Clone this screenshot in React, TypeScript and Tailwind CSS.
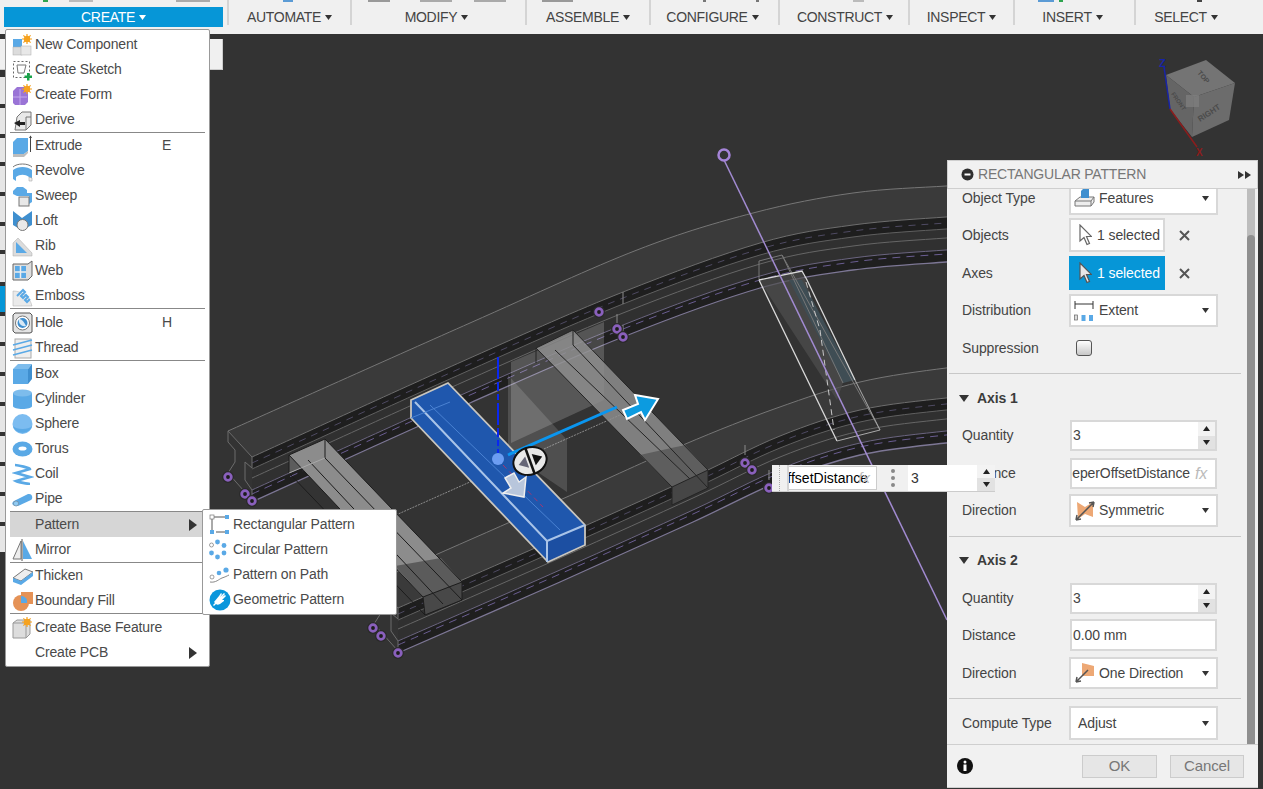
import type { ReactNode } from "react"

type Pt = number[]

const BLUE = "#5aa9e6"
const BLUE_D = "#3f8fcf"
const GRAY = "#dcdcdc"

const smooth = (pts: Pt[]) => {
  let d = `M${pts[0][0]},${pts[0][1]}`
  for (let i = 0; i < pts.length - 1; i++) {
    const p0 = pts[i - 1] || pts[i]
    const p1 = pts[i]
    const p2 = pts[i + 1]
    const p3 = pts[i + 2] || p2
    const c1x = p1[0] + (p2[0] - p0[0]) / 6
    const c1y = p1[1] + (p2[1] - p0[1]) / 6
    const c2x = p2[0] - (p3[0] - p1[0]) / 6
    const c2y = p2[1] - (p3[1] - p1[1]) / 6
    d += ` C${c1x},${c1y} ${c2x},${c2y} ${p2[0]},${p2[1]}`
  }
  return d
}

const shift = (pts: Pt[], dy: number) => pts.map(([x, y]) => [x, y + dy])

const band = (a: Pt[], b: Pt[]) => `${smooth(a)} ${smooth([...b].reverse()).replace("M", "L")} Z`

function Sun({ x = 16, y = 5 }: { x?: number; y?: number }) {
  return (
    <g stroke="#f5a21f" strokeWidth="1.2">
      <circle cx={x} cy={y} r="2.6" fill="#f7a823" />
      <path d={`M${x - 5},${y}h10M${x},${y - 5}v10M${x - 3.6},${y - 3.6}l7.2,7.2M${x + 3.6},${y - 3.6}l-7.2,7.2`} />
    </g>
  )
}

function Ico({ children }: { children: ReactNode }) {
  return (
    <svg width="22" height="22" viewBox="0 0 22 22" className="shrink-0">
      {children}
    </svg>
  )
}

const icons: Record<string, ReactNode> = {
  component: (
    <Ico>
      <rect x="1" y="5" width="9" height="8" fill={BLUE} />
      <rect x="1" y="13" width="9" height="8" fill={GRAY} stroke="#aaa" strokeWidth=".5" />
      <rect x="9" y="12" width="10" height="9" fill="#e8e8e8" stroke="#aaa" strokeWidth=".5" />
      <Sun x={15} y={5} />
    </Ico>
  ),
  sketch: (
    <Ico>
      <rect x="1.5" y="2.5" width="16" height="16" fill="none" stroke="#666" strokeWidth="1" strokeDasharray="2 2" />
      <path d="M5,6h9l-2,8H6z" fill="none" stroke="#777" />
      <path d="M15,14h2.5v2.5H20v2.5h-2.5v2.5H15V19h-2.500v-2.500H15z" fill="#1aa34a" />
    </Ico>
  ),
  form: (
    <Ico>
      <path d="M1,7l4-4h11v15l-3,3H3l-2-2z" fill="#9a74d6" />
      <path d="M1,13h14M8,5v16" stroke="#c3a9ec" />
      <Sun x={15} y={5} />
    </Ico>
  ),
  derive: (
    <Ico>
      <path d="M5,8l5-5h9v13l-5,5H3z" fill="#e9e9e9" stroke="#777" />
      <path d="M14,8h5M14,8v13" stroke="#777" />
      <path d="M2,14l6-3v2h5v3H8v2z" fill="#222" />
    </Ico>
  ),
  extrude: (
    <Ico>
      <path d="M1,7l4-4h11v13l-4,3H1z" fill={BLUE} />
      <path d="M1,19h11l4-3v2l-4,4H1z" fill="#bdbdbd" />
      <path d="M18.500,1v16" stroke="#444" />
      <path d="M17,3l1.500-2.500L20,3z" fill="#444" />
    </Ico>
  ),
  revolve: (
    <Ico>
      <path d="M1,7c4-4,15-4,19,0" fill="none" stroke="#777" />
      <path d="M1,10c5-4,14-4,19,0v9l-3,2v-4c-4-3-9-3-13,0v4l-3-2z" fill={BLUE} />
      <path d="M17,17l3,1v3h-3z" fill="#eee" stroke="#999" strokeWidth=".5" />
    </Ico>
  ),
  sweep: (
    <Ico>
      <path d="M1,6l4-4h6l4,3v3h5v9l-3,2v-8H5l-4-2z" fill={BLUE} />
      <rect x="7" y="12" width="10" height="9" fill="#e8e8e8" stroke="#777" />
    </Ico>
  ),
  loft: (
    <Ico>
      <path d="M1,1l9,7 10-7v14l-6,3H6l-5-3z" fill={BLUE_D} />
      <circle cx="10.500" cy="15" r="5.500" fill="#e9e9e9" stroke="#777" />
    </Ico>
  ),
  rib: (
    <Ico>
      <path d="M1,21V8l5-5 14,15v3z" fill={GRAY} stroke="#aaa" strokeWidth=".5" />
      <path d="M4,18V7l11,11z" fill={BLUE} />
    </Ico>
  ),
  web: (
    <Ico>
      <path d="M1,4h15l4-3v15l-4,4H1z" fill="#ddd" stroke="#666" />
      <rect x="3" y="6" width="11" height="12" fill={BLUE} />
      <path d="M8.500,6v12M3,12h11" stroke="#eee" strokeWidth="1.500" />
    </Ico>
  ),
  emboss: (
    <Ico>
      <path d="M1,21V6c9,0,17,6,19,15z" fill="#eaeaea" stroke="#aaa" strokeWidth=".5" />
      <path d="M5,11l6-6 2,2-4,4 2,2 3-3 2,2-3,3 2,2 3-3" fill="none" stroke={BLUE} strokeWidth="2" />
    </Ico>
  ),
  hole: (
    <Ico>
      <path d="M3,1h15l2,2v17l-2,1H3l-2-2V3z" fill="#e3e3e3" stroke="#555" />
      <circle cx="10.500" cy="11" r="7" fill="#fff" stroke="#777" />
      <circle cx="10.500" cy="11" r="5" fill={BLUE_D} />
      <path d="M7,7c3,0,5,3,7,7-4,1-8-2-7-7z" fill="#fff" opacity=".8" />
    </Ico>
  ),
  thread: (
    <Ico>
      <rect x="3" y="2" width="16" height="19" fill="#eee" stroke="#aaa" />
      <path d="M1,8l19-5M1,13l19-5M1,18l19-5" stroke={BLUE} strokeWidth="1.600" />
    </Ico>
  ),
  box: (
    <Ico>
      <path d="M1,6h15v15H1z" fill={BLUE} />
      <path d="M1,6l5-5h14l-4,5z" fill="#7dbcec" />
      <path d="M16,6l4-5v15l-4,5z" fill={BLUE_D} />
    </Ico>
  ),
  cylinder: (
    <Ico>
      <path d="M1,5v13c0,4,19,4,19,0V5z" fill={BLUE} />
      <ellipse cx="10.500" cy="5" rx="9.500" ry="3.500" fill="#7dbcec" />
    </Ico>
  ),
  sphere: (
    <Ico>
      <circle cx="10.500" cy="11" r="10" fill="#7cbcf0" />
      <path d="M1,13c3,4,16,4,19,0-2,9-17,9-19,0z" fill={BLUE} />
    </Ico>
  ),
  torus: (
    <Ico>
      <ellipse cx="10.500" cy="11" rx="10" ry="7.500" fill={BLUE} />
      <ellipse cx="10.500" cy="10.500" rx="4" ry="2" fill="#fff" />
    </Ico>
  ),
  coil: (
    <Ico>
      <path d="M3,2c3,0,15,3,15,4L4,10l14,4L4,18c2,1,12,3,14,3" fill="none" stroke={BLUE} strokeWidth="2.600" />
    </Ico>
  ),
  pipe: (
    <Ico>
      <path d="M2,13l14-7c5-1,5,5,3,6L6,18c-6,1-7-3-4-5z" fill={BLUE} />
      <ellipse cx="4" cy="15.500" rx="2.500" ry="2.500" fill="#8ecbf5" stroke="#777" strokeWidth=".5" />
    </Ico>
  ),
  mirror: (
    <Ico>
      <path d="M9,2L1,20h8z" fill="#eee" stroke="#777" />
      <path d="M11,2l9,18h-9z" fill={BLUE} />
      <path d="M10,0v22" stroke="#555" />
    </Ico>
  ),
  thicken: (
    <Ico>
      <path d="M1,13L13,4l8,3-12,9z" fill="#eee" stroke="#777" />
      <path d="M1,13l8,3L21,7v4L9,20l-8-3z" fill={BLUE} />
    </Ico>
  ),
  fill: (
    <Ico>
      <rect x="9" y="2" width="12" height="12" fill="#e59256" />
      <circle cx="9" cy="13" r="8" fill="#e59256" />
      <path d="M9,13V6a7,7,0,0,1,6,4v3z" fill={BLUE} />
    </Ico>
  ),
  base: (
    <Ico>
      <path d="M1,6l4-3h13v14l-4,4H1z" fill="#ddd" stroke="#999" />
      <path d="M1,6h13v15M14,6l4-3" fill="none" stroke="#999" />
      <Sun x={15} y={5} />
    </Ico>
  ),
  rect: (
    <Ico>
      <path d="M3,3h13M3,3v14M7,18h10" stroke="#555" fill="none" />
      <rect x="1" y="1" width="4" height="4" fill="#fff" stroke="#777" strokeWidth=".7" />
      <rect x="16" y="1" width="4" height="4" fill={BLUE} />
      <rect x="1" y="16" width="4" height="4" fill={BLUE} />
      <rect x="16" y="16" width="4" height="4" fill={BLUE} />
    </Ico>
  ),
  circular: (
    <Ico>
      <circle cx="2.500" cy="6" r="2" fill="#fff" stroke="#777" strokeWidth=".7" />
      <circle cx="8.500" cy="3" r="2.400" fill={BLUE} />
      <circle cx="15" cy="6.500" r="2.400" fill={BLUE} />
      <circle cx="15" cy="14" r="2.400" fill={BLUE} />
      <circle cx="8.500" cy="18" r="2.400" fill={BLUE} />
      <circle cx="2.500" cy="14" r="2.400" fill={BLUE} />
    </Ico>
  ),
  path: (
    <Ico>
      <circle cx="3" cy="13" r="2" fill="#fff" stroke="#777" strokeWidth=".7" />
      <circle cx="10" cy="9" r="2.300" fill={BLUE} />
      <circle cx="17" cy="6" r="2.600" fill={BLUE} />
      <path d="M1,18c6,1,9-3,12-4,3-1,5-2,7-3" fill="none" stroke="#888" />
    </Ico>
  ),
  geometric: (
    <Ico>
      <circle cx="11" cy="11" r="10.500" fill="#0a96dc" />
      <path d="M5,13l5-6 2-3 1,1-2,3 4-4 1,1-3,3 3-2 1,1-4,4 2,0 0,1-4,3c-2,1-3,1-4,0l-2,2-1-1 2-2z" fill="#fff" />
    </Ico>
  ),
}

type Entry = { label: string; icon?: string; key?: string; more?: boolean; on?: boolean } | "sep" | "sep-low"

const createItems: Entry[] = [
  { label: "New Component", icon: "component" },
  { label: "Create Sketch", icon: "sketch" },
  { label: "Create Form", icon: "form" },
  { label: "Derive", icon: "derive" },
  "sep",
  { label: "Extrude", icon: "extrude", key: "E" },
  { label: "Revolve", icon: "revolve" },
  { label: "Sweep", icon: "sweep" },
  { label: "Loft", icon: "loft" },
  { label: "Rib", icon: "rib" },
  { label: "Web", icon: "web" },
  { label: "Emboss", icon: "emboss" },
  "sep-low",
  { label: "Hole", icon: "hole", key: "H" },
  { label: "Thread", icon: "thread" },
  "sep",
  { label: "Box", icon: "box" },
  { label: "Cylinder", icon: "cylinder" },
  { label: "Sphere", icon: "sphere" },
  { label: "Torus", icon: "torus" },
  { label: "Coil", icon: "coil" },
  { label: "Pipe", icon: "pipe" },
  "sep",
  { label: "Pattern", more: true, on: true },
  { label: "Mirror", icon: "mirror" },
  "sep",
  { label: "Thicken", icon: "thicken" },
  { label: "Boundary Fill", icon: "fill" },
  "sep-low",
  { label: "Create Base Feature", icon: "base" },
  { label: "Create PCB", more: true },
]

const patternItems = [
  { label: "Rectangular Pattern", icon: "rect" },
  { label: "Circular Pattern", icon: "circular" },
  { label: "Pattern on Path", icon: "path" },
  { label: "Geometric Pattern", icon: "geometric" },
]

const tabs = [
  { label: "AUTOMATE", w: "w-[123px]" },
  { label: "MODIFY", w: "w-[175px] pr-[4px]" },
  { label: "ASSEMBLE", w: "w-[124px]" },
  { label: "CONFIGURE", w: "w-[129px] pr-[4px]" },
  { label: "CONSTRUCT", w: "w-[130px] pl-[2px]" },
  { label: "INSPECT", w: "w-[105px]" },
  { label: "INSERT", w: "w-[121px] pr-[4px]" },
  { label: "SELECT", w: "w-[102px]" },
]

function Caret({ className }: { className: string }) {
  return (
    <svg width="7" height="5" viewBox="0 0 7 5" className={className}>
      <path d="M0,0h7L3.500,5z" fill="currentColor" />
    </svg>
  )
}

function Toolbar() {
  return (
    <div className="relative h-[34px] shrink-0 bg-[#f0f0f0] flex items-start pt-[7px] pl-[4px] text-[14px] text-[#444] tracking-[-0.3px]">
      <svg width="1263" height="4" className="absolute left-0 top-0">
        <rect x="43" y="0" width="5" height="2" fill="#2ea44f" />
        <rect x="69" y="0" width="24" height="2" fill="#bbb" />
        <rect x="176" y="0" width="34" height="2" fill="#aaa" />
        <rect x="283" y="0" width="10" height="2" fill="#5b9bd5" />
        <rect x="368" y="0" width="22" height="2" fill="#999" />
        <rect x="420" y="0" width="32" height="2" fill="#aaa" />
        <rect x="474" y="0" width="32" height="2" fill="#aaa" />
        <rect x="542" y="0" width="31" height="2" fill="#999" />
        <rect x="703" y="0" width="3" height="2" fill="#777" />
        <rect x="756" y="0" width="3" height="2" fill="#777" />
        <rect x="853" y="0" width="11" height="2" fill="#bbb" />
        <rect x="1038" y="0" width="16" height="2" fill="#5b9bd5" />
        <rect x="1059" y="0" width="4" height="2" fill="#2ea44f" />
        <rect x="1197" y="0" width="5" height="2" fill="#444" />
      </svg>
      <div className="w-[219px] h-[20px] mr-[5px] bg-[#0696d7] text-white flex items-center justify-center gap-[4px]">
        CREATE
        <Caret className="text-white" />
      </div>
      {tabs.map((t) => (
        <div key={t.label} className={`${t.w} h-[20px] flex items-center justify-center gap-[4px] relative`}>
          {t.label}
          <Caret className="text-[#333]" />
          <span className="absolute left-[-1px] top-[-7px] h-[25px] w-[2px] bg-[#d4d4d4]" />
        </div>
      ))}
    </div>
  )
}

function Rail({ top, front }: { top: Pt[]; front: Pt[] }) {
  const s = front[0]
  const sx = s[0] - 24
  const sy = s[1] - 26
  const section = [
    [0, 0], [0, 11], [7, 19], [7, 31], [0, 42], [24, 69], [24, 59], [17, 49], [17, 31], [24, 37], [24, 26], [0, 0],
  ]
  return (
    <g fill="none">
      <path d={band(top, front)} fill="#3a3a3a" stroke="none" />
      <path d={band(front, shift(front, 12))} fill="#1e1e1e" stroke="none" />
      <path d={band(shift(front, 12), shift(front, 33))} fill="#303030" stroke="none" />
      <path d={band(shift(front, 33), shift(front, 45))} fill="#1f1f1f" stroke="none" />
      <path d={smooth(top)} stroke="#767676" />
      <path d={smooth(front)} stroke="#6e6e6e" />
      <path d={smooth(shift(front, 12))} stroke="#5f5f5f" />
      <path d={smooth(shift(front, 21))} stroke="#666" />
      <path d={smooth(shift(front, 45))} stroke="#7d7795" strokeWidth="1.300" />
      <path d={smooth(shift(front, 6))} stroke="#4e4a62" strokeDasharray="7 6" />
      <path d={smooth(shift(front, 33))} stroke="#6b6580" />
      <path d={smooth(shift(front, 37))} stroke="#6a5d92" strokeDasharray="8 6" />
      <polygon points={section.map(([x, y]) => `${sx + x},${sy + y}`).join(" ")} fill="#333" stroke="#6c6c6c" />
    </g>
  )
}

function Ring({ x, y }: { x: number; y: number }) {
  return (
    <g>
      <circle cx={x} cy={y} r="6" fill="#2a2a2a" />
      <circle cx={x} cy={y} r="3.300" fill="#1c1c1c" stroke="#8a60bd" strokeWidth="2.800" />
    </g>
  )
}

function Scene() {
  const aFront = [[252, 457], [470, 358], [623, 292], [760, 243], [853, 225], [946, 217], [1000, 214]]
  const aTop = [[228, 431], [470, 323], [637, 250], [753, 213], [853, 193], [946, 186], [1000, 183]]
  const bFront = [[398, 608], [560, 537], [693, 477], [780, 436], [860, 410], [946, 398], [1000, 394]]
  const bTop = [[374, 582], [560, 500], [683, 445], [777, 408], [860, 382], [946, 368], [1000, 364]]

  return (
    <svg viewBox="0 34 1263 755" className="block w-full h-full">
      <Rail top={aTop} front={aFront} />
      <Rail top={bTop} front={bFront} />

      {/* cut marks on the first rail */}
      <path d="M623,292v12M617,314v11M623,325v9M745,445v10M769,470v10" stroke="#8a8a8a" fill="none" />

      {/* translucent planes at the origin */}
      <polygon points="511,362 604,322 604,400 511,443" fill="#fff" fillOpacity=".18" />
      <polygon points="508,375 567,440 567,492 508,452" fill="#fff" fillOpacity=".14" />
      <path d="M396,515L620,415" stroke="#c4c4c4" strokeOpacity=".6" strokeDasharray="2 1" />

      {/* left sleeper */}
      <polygon points="289,455 325,439 325,458 289,473" fill="#5c5c5c" />
      <polygon points="289,455 325,439 462,582 423,597" fill="#8c8c8c" />
      <polygon points="395,566 441,558 462,582 423,597" fill="#5b5b5b" />
      <polygon points="423,597 462,582 462,600 425,615" fill="#484848" />
      <path d="M289,455L325,439L462,582L462,600L425,615L423,597L289,455M325,439V458L462,600M289,455V473L425,615M308,460L443,604M423,597L462,582" stroke="#1c1c1c" fill="none" />
      <path d="M289,473L325,458" stroke="#a9a9a9" />

      {/* middle sleeper */}
      <polygon points="536,348 573,330 708,470 672,487" fill="#909090" fillOpacity=".82" />
      <polygon points="640,455 685,445 708,470 672,487" fill="#5e5e5e" />
      <polygon points="672,487 708,470 708,488 672,505" fill="#464646" />
      <path d="M536,348L573,330L708,470V488L672,505V487L536,348M536,348V363M573,330V345L708,488M555,350L690,479M672,487L708,470" stroke="#242424" fill="none" />

      {/* far sleeper, see-through */}
      <polygon points="759,280 802,271 843,383 837,400" fill="#4e4e4e" fillOpacity=".7" />
      <polygon points="802,280 855,380 843,383 789,280" fill="#3f4d54" />
      <path d="M759,261L782,255L880,430M759,261V280M843,383L782,255" stroke="#777" fill="none" />
      <path d="M759,280L802,271L807,280L855,380M759,280L837,441" stroke="#d9d9d9" strokeWidth="1.300" fill="none" />
      <path d="M837,441L880,430M855,380L880,430" stroke="#aaa" fill="none" />
      <path d="M806,282L820,330L834,430" stroke="#c8c8c8" strokeDasharray="6 4" fill="none" />

      {/* construction axis */}
      <line x1="724" y1="160" x2="947" y2="620" stroke="#a28bd2" strokeWidth="1.500" />
      <circle cx="724" cy="155" r="5.500" fill="none" stroke="#a584d8" strokeWidth="2.500" />

      <Ring x={228} y={477} />
      <Ring x={245} y={494} />
      <Ring x={252} y={501} />
      <Ring x={373} y={628} />
      <Ring x={381} y={636} />
      <Ring x={398} y={653} />
      <Ring x={599} y={312} />
      <Ring x={617} y={329} />
      <Ring x={623} y={337} />
      <Ring x={745} y={463} />
      <Ring x={752} y={470} />
      <Ring x={769} y={488} />

      {/* selected blue sleeper */}
      <polygon points="411,400 448,383 585,525 585,545 548,562 411,418" fill="#1f57ad" />
      <polygon points="547,541 585,525 585,545 548,562" fill="#1c4fa2" />
      <path d="M411,400L448,383L585,525L585,545L548,562L411,418Z" stroke="#c9c6bf" strokeWidth="1.800" fill="none" />
      <path d="M415,402L547,541L585,525M547,541V562" stroke="#a9c4e8" strokeWidth="2" fill="none" />
      <path d="M411,418L450,402M430,405L560,530" stroke="#4a82d2" fill="none" />
      <path d="M503,465L543,507" stroke="#a53672" strokeDasharray="5 4" />

      {/* manipulator */}
      <path d="M498,357V453" stroke="#0a27f0" strokeWidth="2" strokeDasharray="22 3 9 3 6 3" />
      <circle cx="498" cy="459" r="6" fill="#6c9df2" />
      <path d="M508,455L617,407" stroke="#0a96f0" strokeWidth="3" />
      <polygon points="635,395 658,399 645,420 641,412 627,419 623,410 638,404" fill="#0c9be0" stroke="#fff" strokeWidth="2" />
      <g transform="rotate(-20 530 461)">
        <ellipse cx="530" cy="461" rx="17" ry="13.500" fill="#e8e8e8" stroke="#111" strokeWidth="2" />
        <path d="M530,448V474" stroke="#111" strokeWidth="2.500" />
        <path d="M527,455v12l-9-6z" fill="#667" />
        <path d="M534,455v12l9-6z" fill="#111" />
      </g>
      <polygon points="505,478 514,473 519,482 526,477 524,497 503,493 511,488" fill="#b8c6dc" stroke="#eee" strokeWidth="1.500" />

      {/* view cube */}
      <polygon points="1206,60 1235,83 1194,97 1166,75" fill="#747474" />
      <polygon points="1166,75 1194,97 1192,137 1170,109" fill="#656565" />
      <polygon points="1194,97 1235,83 1229,120 1192,137" fill="#6c6c6c" />
      <rect x="1186" y="95" width="13" height="12" fill="#808080" fillOpacity=".7" />
      <text x="0" y="0" transform="translate(1197,73) rotate(50)" fontSize="7" fontWeight="700" fill="#4b4b4b">TOP</text>
      <text x="0" y="0" transform="translate(1171,94) rotate(55)" fontSize="6" fontWeight="700" fill="#4b4b4b">FRONT</text>
      <text x="0" y="0" transform="translate(1200,122) rotate(-33)" fontSize="8" fontWeight="700" fill="#4b4b4b">RIGHT</text>
      <path d="M1164,67L1170,109" stroke="#1824a8" strokeWidth="1.500" />
      <path d="M1170,109L1197,147" stroke="#8c1c1c" strokeWidth="1.500" />
      <text x="1159" y="67" fontSize="11" fontWeight="700" fill="#1824a8">Z</text>
      <text x="1196" y="156" fontSize="10" fontWeight="700" fill="#8c1c1c">X</text>
    </svg>
  )
}

function BrowserStub() {
  const rows = ["h-[27px]", "h-[26px]", "h-[24px]", "h-[26px]", "h-[26px]", "h-[24px]", "h-[28px]", "h-[26px]", "h-[26px]", "h-[26px]", "h-[26px]", "h-[26px]", "h-[26px]", "h-[26px]", "h-[26px]", "h-[26px]"]
  return (
    <>
      <div className="absolute left-0 top-[5px] w-[223px] h-[31px] bg-[#f0f0f0] border-b border-r border-[#ccc]" />
      <div className="absolute left-0 top-[43px] w-[6px] flex flex-col gap-[4px]">
        {rows.map((r, i) => (
          <div key={i} className={`${r} ${i === 7 ? "bg-[#0696d7]" : "bg-[#e6e6e6]"}`} />
        ))}
      </div>
    </>
  )
}

function CreateMenu() {
  return (
    <div className="absolute z-10 left-[5px] top-[-5px] w-[205px] h-[638px] bg-white border border-[#999] rounded-[2px] pt-[2px] text-[14px] tracking-[-0.15px] text-[#4a4a4a]">
      {createItems.map((item, i) => {
        if (item === "sep" || item === "sep-low") {
          return <div key={i} className={`h-px mx-[4px] bg-[#888] ${item === "sep-low" ? "mb-px" : ""}`} />
        }
        return (
          <div key={item.label} className={`h-[25px] mx-[4px] pl-[2px] flex items-center relative ${item.on ? "bg-[#d6d6d6]" : ""}`}>
            <span className="w-[23px] shrink-0 flex items-center">{item.icon && icons[item.icon]}</span>
            <span className="whitespace-nowrap">{item.label}</span>
            {item.key && <span className="absolute left-[152px]">{item.key}</span>}
            {item.more && (
              <svg width="8" height="12" viewBox="0 0 8 12" className="absolute left-[179px]">
                <path d="M0,0L8,6L0,12z" fill="#333" />
              </svg>
            )}
          </div>
        )
      })}
    </div>
  )
}

function PatternMenu() {
  return (
    <div className="absolute z-20 left-[202px] top-[475px] w-[195px] h-[106px] bg-white border border-[#999] rounded-[2px] pt-[2px] pl-[6px] text-[14px] tracking-[-0.15px] text-[#4a4a4a]">
      {patternItems.map((item) => (
        <div key={item.label} className="h-[25px] flex items-center gap-[2px]">
          {icons[item.icon]}
          <span className="whitespace-nowrap">{item.label}</span>
        </div>
      ))}
    </div>
  )
}

function Arrow({ dark }: { dark?: boolean }) {
  return (
    <svg width="14" height="22" viewBox="0 0 14 22" className="shrink-0">
      <path d="M2,1V17L6,13.500L9,20.500L11.500,19.500L8.500,12.500H13.500Z" fill={dark ? "#e8e8e8" : "#fff"} stroke={dark ? "#555" : "#666"} strokeWidth="1.200" />
    </svg>
  )
}

function Row({ label, className, children }: { label: string; className: string; children: ReactNode }) {
  return (
    <div className={`flex items-center pl-[15px] ${className}`}>
      <span className="w-[107px] shrink-0 whitespace-nowrap">{label}</span>
      {children}
    </div>
  )
}

function Select({ icon, text, className = "" }: { icon?: ReactNode; text: string; className?: string }) {
  return (
    <div className={`w-[149px] h-full bg-white border-2 border-[#d8d8d8] flex items-center pl-[3px] pr-[7px] ${className}`}>
      {icon && <span className="w-[25px] shrink-0 flex">{icon}</span>}
      <span className="flex-1 whitespace-nowrap">{text}</span>
      <Caret className="text-[#333]" />
    </div>
  )
}

function Spinner({ className }: { className: string }) {
  return (
    <div className={`flex flex-col shrink-0 ${className}`}>
      <div className="flex-1 flex items-center justify-center bg-[#f3f3f3]">
        <svg width="7" height="5" viewBox="0 0 7 5">
          <path d="M0,5h7L3.500,0z" fill="#222" />
        </svg>
      </div>
      <div className="flex-1 flex items-center justify-center bg-[#e2e2e2]">
        <svg width="7" height="5" viewBox="0 0 7 5">
          <path d="M0,0h7L3.500,5z" fill="#222" />
        </svg>
      </div>
    </div>
  )
}

function Quantity({ mt }: { mt: string }) {
  return (
    <Row label="Quantity" className={`h-[31px] ${mt}`}>
      <div className="ml-px w-[147px] h-full bg-white border-2 border-[#d8d8d8] flex items-center">
        <span className="flex-1 pl-[1px]">3</span>
        <Spinner className="w-[17px] h-full" />
      </div>
    </Row>
  )
}

function Divider({ mt }: { mt: string }) {
  return <div className={`h-px ml-[2px] w-[292px] bg-[#c8c8c8] ${mt}`} />
}

function AxisHead({ label, mt }: { label: string; mt: string }) {
  return (
    <div className={`h-[24px] pl-[12px] flex items-center gap-[8px] font-bold text-[#3c3c3c] ${mt}`}>
      <svg width="10" height="7" viewBox="0 0 10 7">
        <path d="M0,0h10L5,7z" fill="#333" />
      </svg>
      {label}
    </div>
  )
}

function SelectIcon({ kind }: { kind: string }) {
  if (kind === "features") {
    return (
      <svg width="22" height="20" viewBox="0 0 22 20">
        <path d="M1,18V13L6,9H20V14L17,18Z" fill="#eee" stroke="#777" />
        <path d="M7,10V3L9,1H15V10Z" fill={BLUE_D} />
        <path d="M1,13H17V18M17,13L20,9" stroke="#777" fill="none" />
      </svg>
    )
  }
  if (kind === "extent") {
    return (
      <svg width="20" height="22" viewBox="0 0 20 22">
        <path d="M1,1V9M19,1V9M1,4H19" stroke="#333" fill="none" />
        <rect x="0.500" y="15" width="3" height="5" fill="#ddd" stroke="#666" strokeWidth=".7" />
        <rect x="7.500" y="15" width="4" height="6" fill={BLUE} />
        <rect x="15" y="15" width="4" height="6" fill={BLUE} />
      </svg>
    )
  }
  if (kind === "symmetric") {
    return (
      <svg width="22" height="22" viewBox="0 0 22 22">
        <path d="M3,2L11,7L19,2V17L11,14L4,19Z" fill="#eda875" />
        <path d="M2,20L20,2M20,2l-5,1M20,2l-1,5M2,20l5-1M2,20l1-5" stroke="#555" strokeWidth="1.500" fill="none" />
      </svg>
    )
  }
  return (
    <svg width="22" height="22" viewBox="0 0 22 22">
      <path d="M8,1L20,4V14L8,14Z" fill="#eda875" />
      <path d="M2,20L14,8M2,20l1-5M2,20l5-1" stroke="#555" strokeWidth="1.500" fill="none" />
    </svg>
  )
}

function Cross() {
  return (
    <svg width="11" height="11" viewBox="0 0 11 11" className="ml-[14px]">
      <path d="M1,1L10,10M10,1L1,10" stroke="#555" strokeWidth="2" />
    </svg>
  )
}

function PatternPanel() {
  return (
    <div className="absolute z-10 left-[947px] top-[126px] w-[311px] h-[628px] bg-[#f0f0f0] flex flex-col text-[14px] tracking-[-0.1px] text-[#444]">
      <div className="h-[29px] shrink-0 px-[13px] flex items-center gap-[4px] border border-[#cfcfcf] bg-[#f1f1f1] relative z-10">
        <svg width="13" height="13" viewBox="0 0 13 13" className="shrink-0">
          <circle cx="6.500" cy="6.500" r="6" fill="#2f2f2f" />
          <path d="M3.500,6.500h6" stroke="#fff" strokeWidth="2" />
        </svg>
        <span className="flex-1 text-[#777] tracking-[-0.2px]">RECTANGULAR PATTERN</span>
        <svg width="13" height="8" viewBox="0 0 13 8" className="mr-[-7px]">
          <path d="M0,0L6,4L0,8zM7,0L13,4L7,8z" fill="#333" />
        </svg>
      </div>
      <div className="flex-1 min-h-0 overflow-hidden relative">
        <div className="absolute right-[3px] top-0 bottom-0 w-[8px] bg-[#bdbdbd]" />
        <div className="absolute right-[3px] top-[46px] bottom-0 w-[8px] rounded-t-[4px] bg-[#8f8f8f]" />
        <div className="-mt-[8px]">
          <Row label="Object Type" className="h-[34px]">
            <Select icon={<SelectIcon kind="features" />} text="Features" />
          </Row>
          <Row label="Objects" className="h-[34px] mt-[3px]">
            <div className="w-[96px] h-full bg-white border-2 border-[#d8d8d8] flex items-center pl-[7px] gap-[5px] whitespace-nowrap">
              <Arrow />
              1 selected
            </div>
            <Cross />
          </Row>
          <Row label="Axes" className="h-[34px] mt-[4px]">
            <div className="w-[96px] h-full bg-[#0696d7] text-white flex items-center pl-[9px] gap-[5px] whitespace-nowrap">
              <Arrow dark />
              1 selected
            </div>
            <Cross />
          </Row>
          <Row label="Distribution" className="h-[33px] mt-[4px]">
            <Select icon={<SelectIcon kind="extent" />} text="Extent" />
          </Row>
          <Row label="Suppression" className="h-[34px] mt-[4px]">
            <div className="ml-[7px] w-[16px] h-[16px] rounded-[3px] border border-[#555] bg-linear-to-b from-white to-[#c8c8c8]" />
          </Row>
          <Divider mt="mt-[8px]" />
          <AxisHead label="Axis 1" mt="mt-[12px]" />
          <Quantity mt="mt-[10px]" />
          <Row label="Distance" className="h-[31px] mt-[7px]">
            <div className="ml-px w-[147px] h-full bg-white border-2 border-[#d8d8d8] flex items-center overflow-hidden">
              <div className="flex-1 min-w-0 flex justify-end overflow-hidden pr-[5px]">
                <span className="shrink-0 whitespace-nowrap">SleeperOffsetDistance</span>
              </div>
              <span className="shrink-0 w-[17px] mr-[3px] italic text-[16px] text-[#bbb]">fx</span>
            </div>
          </Row>
          <Row label="Direction" className="h-[33px] mt-[5px]">
            <Select icon={<SelectIcon kind="symmetric" />} text="Symmetric" />
          </Row>
          <Divider mt="mt-[9px]" />
          <AxisHead label="Axis 2" mt="mt-[11px]" />
          <Quantity mt="mt-[11px]" />
          <Row label="Distance" className="h-[32px] mt-[5px]">
            <div className="ml-px w-[147px] h-full bg-white border-2 border-[#d8d8d8] flex items-center pl-[1px]">0.00 mm</div>
          </Row>
          <Row label="Direction" className="h-[32px] mt-[6px]">
            <Select icon={<SelectIcon kind="one" />} text="One Direction" />
          </Row>
          <Divider mt="mt-[9px]" />
          <Row label="Compute Type" className="h-[34px] mt-[7px]">
            <Select text="Adjust" className="pl-[7px]" />
          </Row>
        </div>
      </div>
      <div className="h-[44px] shrink-0 border-t border-b border-[#cfcfcf] flex items-center pl-[10px] pr-[14px] bg-[#f1f1f1]">
        <svg width="16" height="16" viewBox="0 0 16 16">
          <circle cx="8" cy="8" r="8" fill="#111" />
          <circle cx="8" cy="4" r="1.500" fill="#fff" />
          <rect x="6.500" y="6.500" width="3" height="6.500" fill="#fff" />
        </svg>
        <div className="flex-1" />
        <div className="w-[75px] h-[23px] bg-[#e6e6e6] border border-[#ccc] flex items-center justify-center text-[#777] text-[15px]">OK</div>
        <div className="ml-[13px] w-[74px] h-[23px] bg-[#e6e6e6] border border-[#ccc] flex items-center justify-center text-[#777] text-[15px]">Cancel</div>
      </div>
    </div>
  )
}

function FloatingInput() {
  return (
    <div className="absolute z-20 left-[772px] top-[431px] w-[223px] h-[27px] bg-[#f0f0f0] flex items-stretch text-[14px] border-b border-[#ccc]">
      <div className="w-[17px] shrink-0 border-r-2 border-[#d4d4d4] flex justify-center">
        <div className="w-px h-full border-l border-dotted border-[#aaa]" />
      </div>
      <div className="w-[88px] my-[1px] shrink-0 bg-white border-y border-r border-[#ccc] flex justify-end items-center overflow-hidden pr-[8px] pt-px text-black relative">
        <span className="shrink-0 whitespace-nowrap">SleeperOffsetDistance</span>
        <span className="absolute right-[6px] italic text-[15px] text-[#bbb]">fx</span>
      </div>
      <div className="w-[31px] shrink-0 flex flex-col items-center justify-center gap-[3px]">
        <span className="w-[4px] h-[4px] rounded-full bg-[#888]" />
        <span className="w-[4px] h-[4px] rounded-full bg-[#888]" />
        <span className="w-[4px] h-[4px] rounded-full bg-[#888]" />
      </div>
      <div className="w-[69px] shrink-0 bg-white flex items-center pl-[3px] pt-px text-[#333]">3</div>
      <Spinner className="w-[18px]" />
    </div>
  )
}

export default function App() {
  return (
    <div className="w-[1263px] h-[789px] overflow-hidden flex flex-col bg-[#333] font-['Liberation_Sans',Arial,sans-serif]">
      <Toolbar />
      <div className="relative flex-1 min-h-0">
        <Scene />
        <BrowserStub />
        <CreateMenu />
        <PatternMenu />
        <PatternPanel />
        <FloatingInput />
      </div>
    </div>
  )
}
